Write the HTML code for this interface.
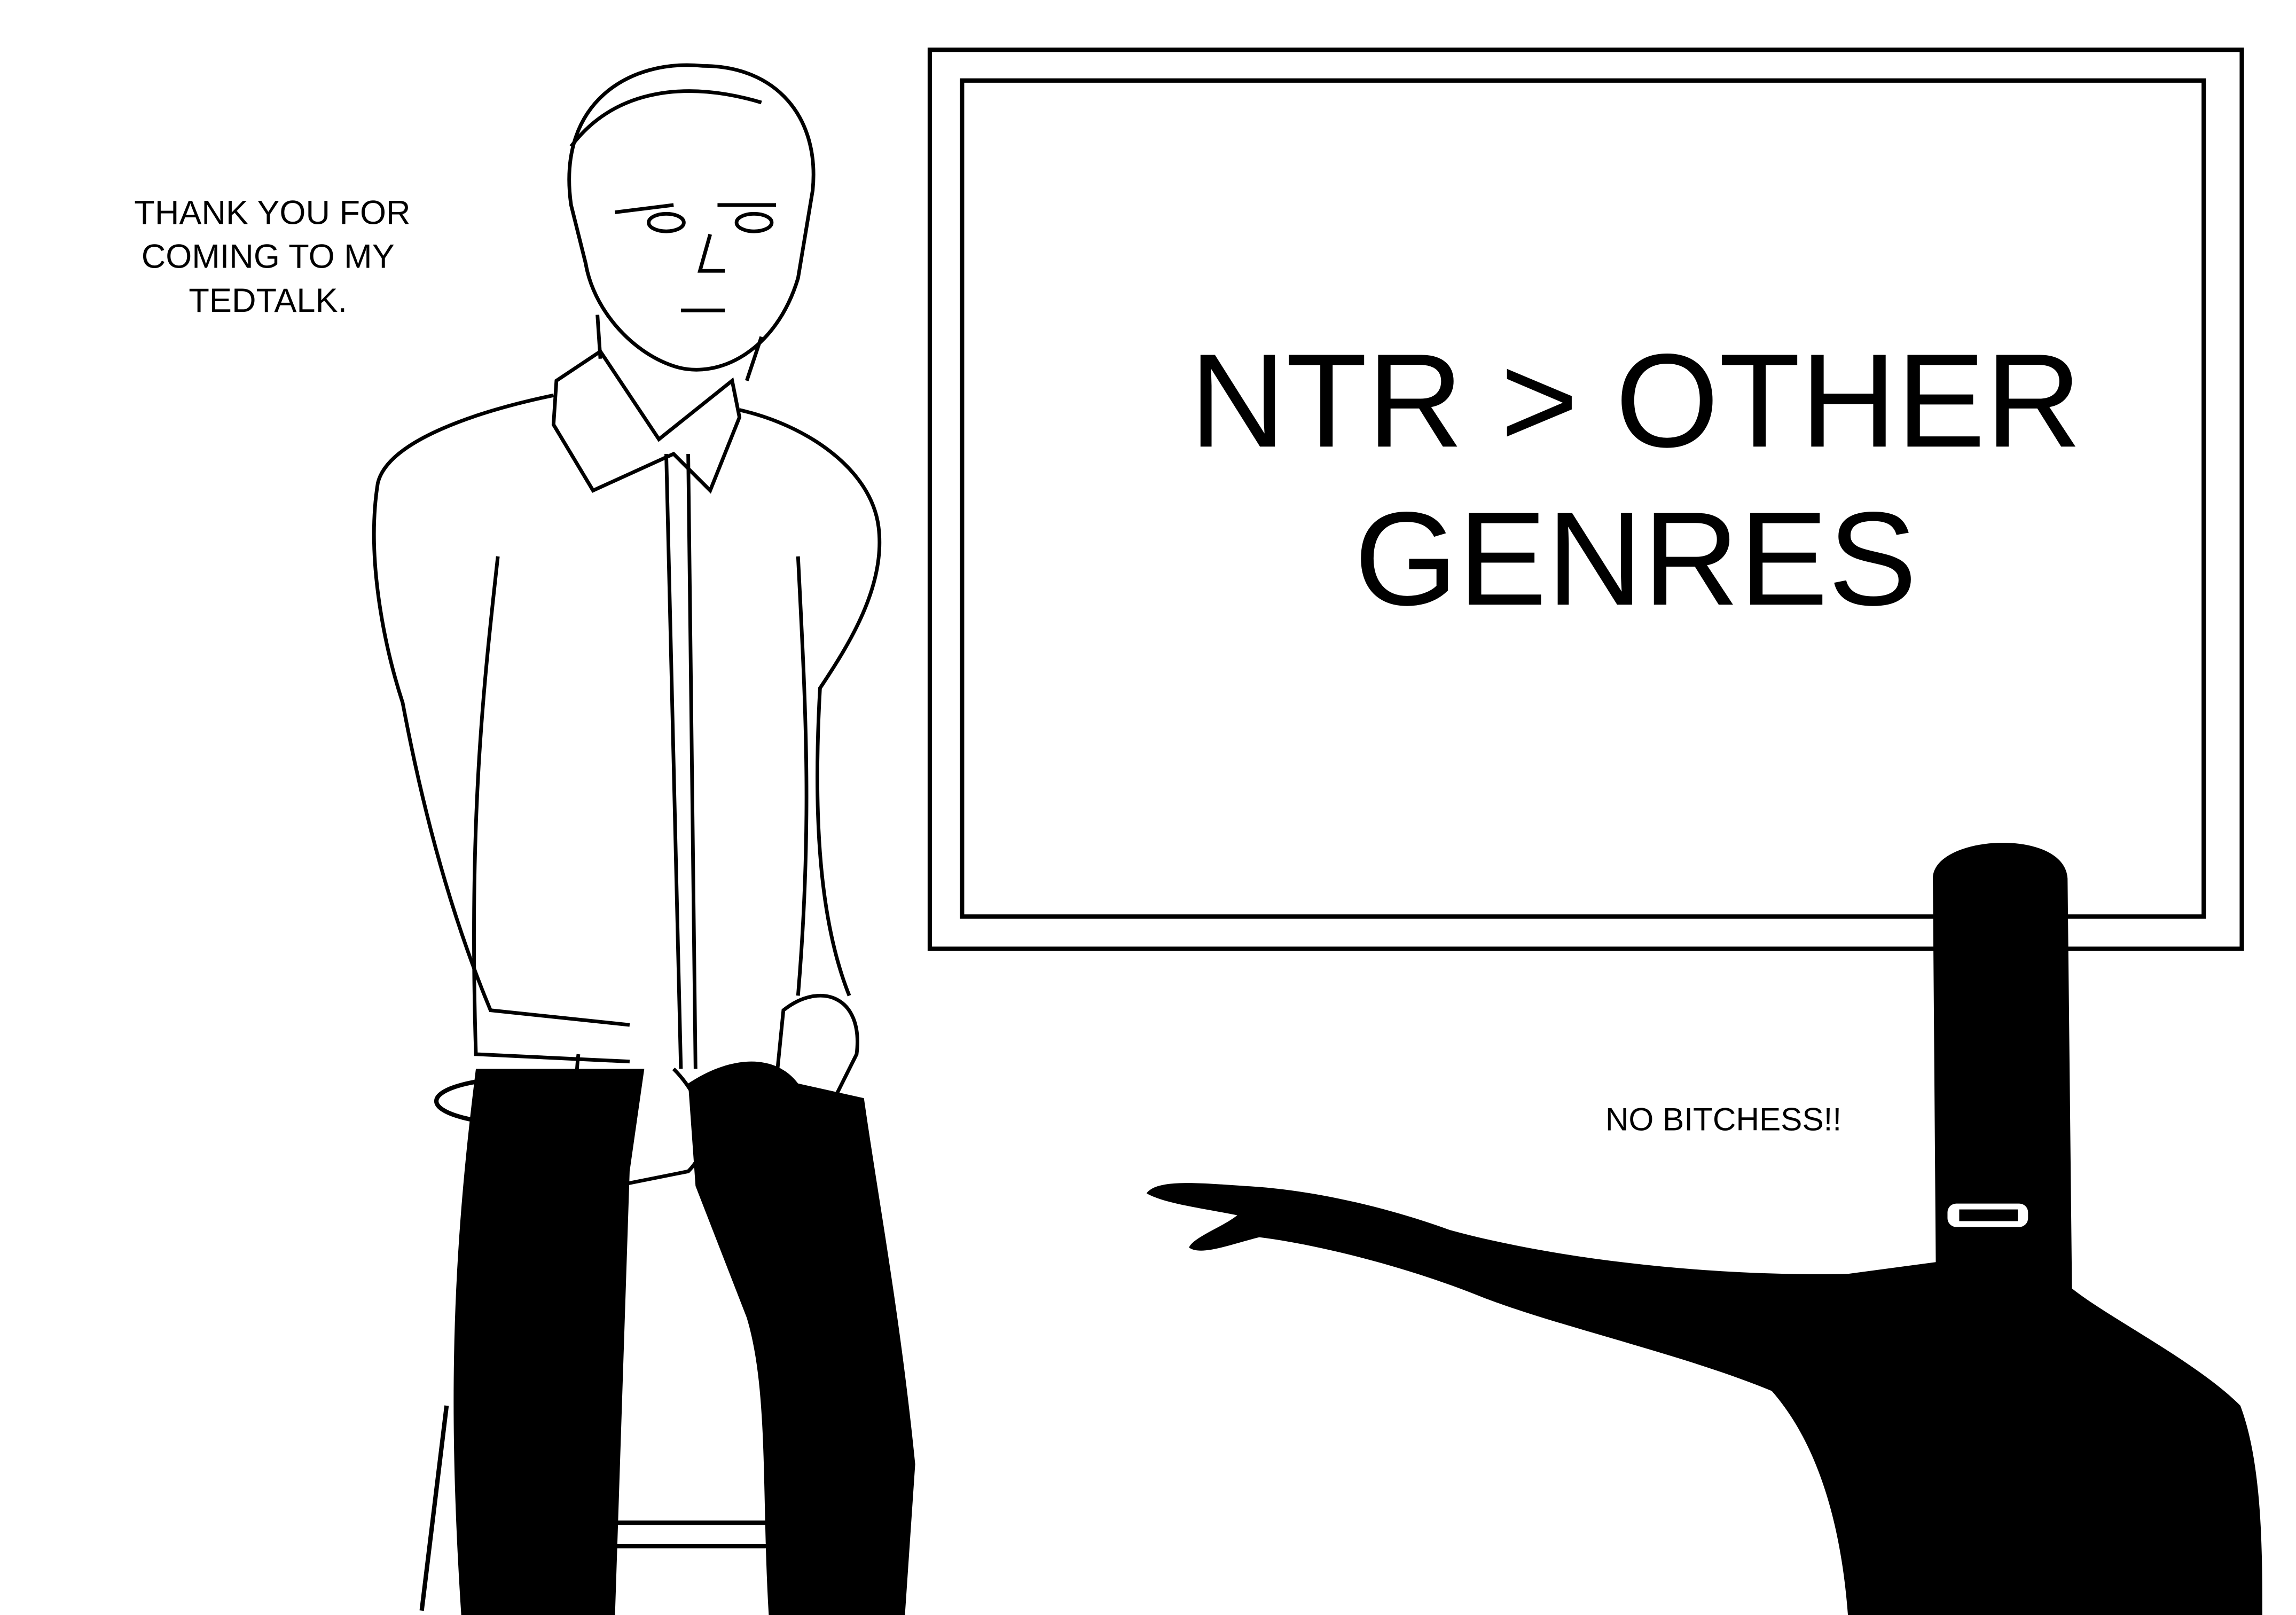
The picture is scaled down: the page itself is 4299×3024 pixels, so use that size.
<!DOCTYPE html>
<html><head><meta charset="utf-8"><style>
html,body{margin:0;padding:0;background:#fff;width:4299px;height:3024px;overflow:hidden}
svg{display:block}
</style></head><body>
<svg width="4299" height="3024" viewBox="0 0 1568 1103" preserveAspectRatio="none" xmlns="http://www.w3.org/2000/svg">
<rect width="1568" height="1103" fill="#fff"/>
<rect x="635" y="34" width="896" height="614" fill="none" stroke="#000" stroke-width="3"/>
<rect x="657" y="55" width="848" height="571" fill="none" stroke="#000" stroke-width="3"/>
<text x="1117" y="305" font-family="Liberation Sans, sans-serif" font-size="91" text-anchor="middle">NTR &gt; OTHER</text>
<text x="1117" y="413" font-family="Liberation Sans, sans-serif" font-size="91" text-anchor="middle">GENRES</text>
<g font-family="Liberation Sans, sans-serif" font-size="23" text-anchor="middle">
<text x="186" y="153">THANK YOU FOR</text>
<text x="183" y="183">COMING TO MY</text>
<text x="183" y="213">TEDTALK.</text>
<text x="1177" y="772" font-size="22">NO BITCHESS!!</text>
</g>
<g stroke="#000" stroke-width="3" fill="none">
<ellipse cx="360" cy="752" rx="62" ry="16"/>
<line x1="305" y1="960" x2="288" y2="1100"/>
<line x1="400" y1="1040" x2="530" y2="1040"/>
<line x1="400" y1="1056" x2="530" y2="1056"/>
</g>
<g stroke="#000" stroke-width="2.5" fill="none">
<path d="M390 140 C380 70 430 40 480 45 C530 45 560 80 555 130 L545 190 C530 240 490 260 460 250 C430 240 405 210 400 180 Z"/>
<path d="M390 100 C420 60 470 55 520 70"/>
<path d="M420 145 L460 140 M490 140 L530 140"/>
<ellipse cx="455" cy="152" rx="12" ry="6"/><ellipse cx="515" cy="152" rx="12" ry="6"/>
<path d="M485 160 L478 185 L495 185"/><path d="M465 212 L495 212"/>
<path d="M408 215 L410 245 M520 230 L510 260"/>
<path d="M380 260 L410 240 L450 300 L500 260 L505 285 L485 335 L460 310 L405 335 L378 290 Z"/>
<path d="M378 270 C330 280 265 300 258 330 C250 380 262 440 275 480 C290 560 310 630 335 690 L430 700"/>
<path d="M505 280 C550 290 595 320 600 360 C605 400 580 440 560 470 C555 560 560 630 580 680"/>
<path d="M340 380 C330 470 320 560 325 720 L430 725"/>
<path d="M545 380 C550 480 555 560 545 680"/>
<path d="M455 310 L465 730 M470 310 L475 730"/>
<path d="M395 720 C390 760 400 800 420 810 L470 800 C490 780 480 750 460 730"/>
<path d="M535 690 C560 670 590 680 585 720 L570 750 L530 740 Z"/>
</g>
<path d="M325 730 L440 730 L430 800 L420 1103 L315 1103 C305 950 310 850 325 730 Z" fill="#000"/>
<path d="M470 740 C500 720 530 720 545 740 L590 750 C600 820 615 900 625 1000 L618 1103 L525 1103 C520 1020 525 950 510 900 L475 810 Z" fill="#000"/>
<path d="M1320 600 C1320 570 1410 565 1412 600 L1415 880 C1440 900 1500 930 1530 960 C1545 1000 1545 1060 1545 1103 L1262 1103 C1258 1050 1245 990 1210 950 C1150 925 1060 905 1010 885 C960 865 900 850 860 845 C840 850 820 858 812 852 C815 845 835 838 845 830 C820 825 795 822 783 815 C790 805 820 808 850 810 C890 812 940 822 990 840 C1070 862 1180 872 1262 870 L1322 862 Z" fill="#000"/>
<rect x="1330" y="822" width="55" height="16" rx="6" fill="#fff"/>
<rect x="1338" y="826" width="40" height="8" fill="#000"/>
</svg>
</body></html>
